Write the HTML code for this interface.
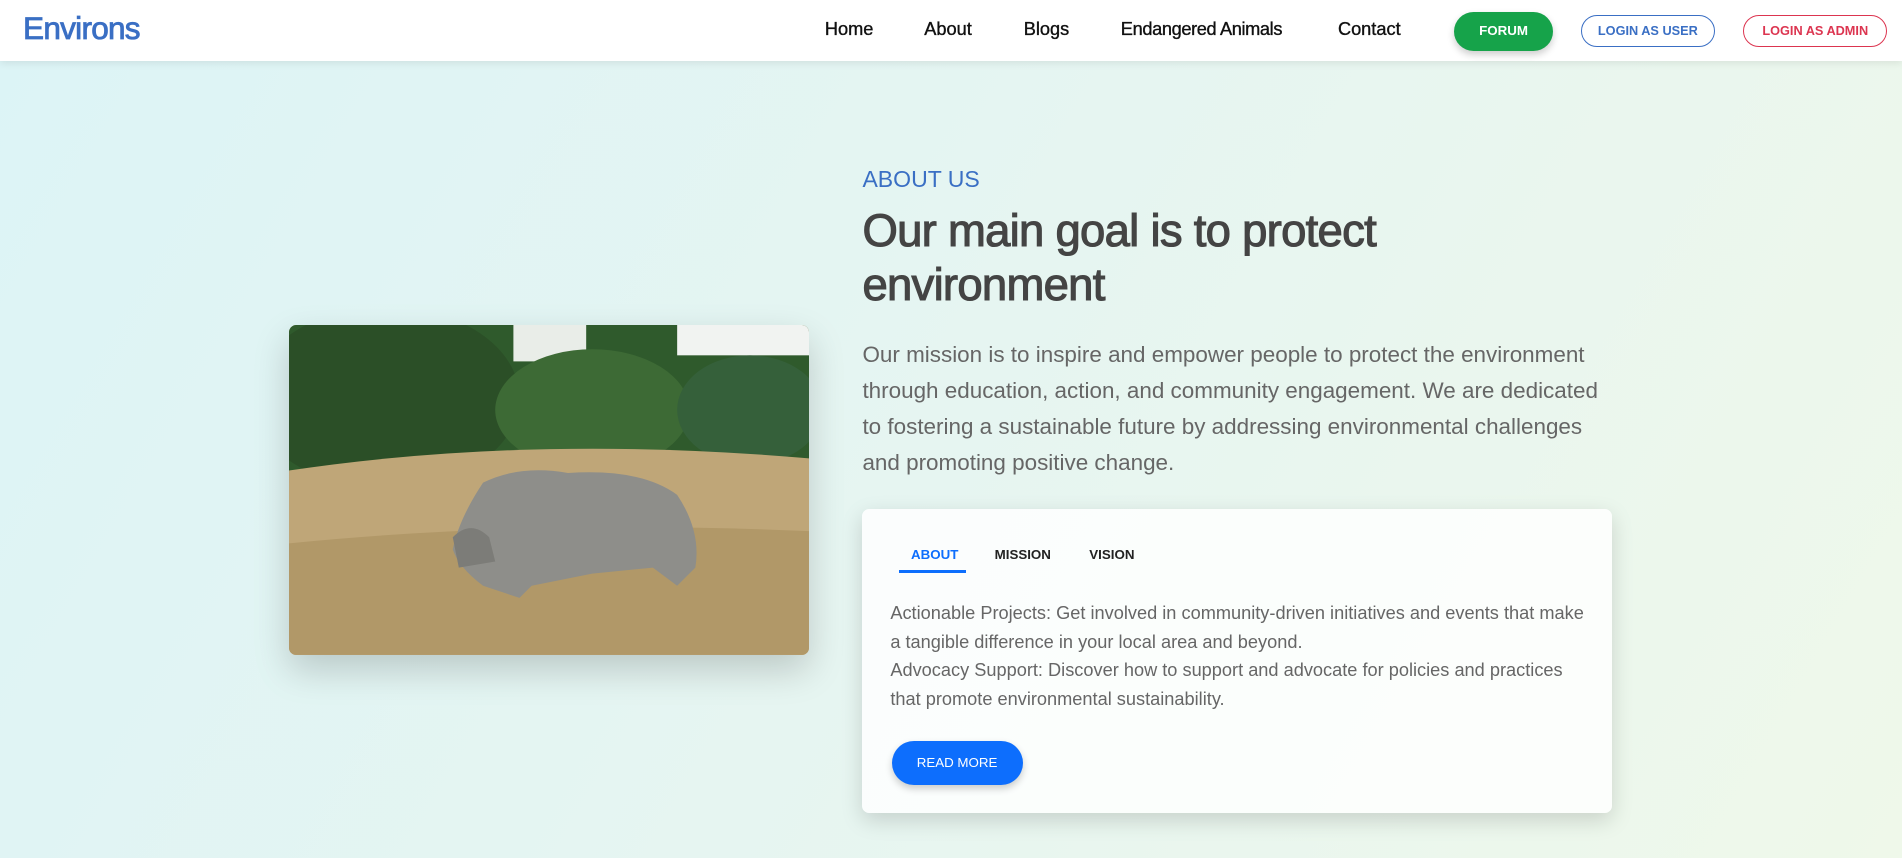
<!DOCTYPE html>
<html><head><meta charset="utf-8"><style>
html,body{margin:0;padding:0;overflow:hidden}
body{width:1568px;height:707px;zoom:1.2130;font-family:"Liberation Sans",Roboto,sans-serif;background:linear-gradient(120deg,#dcf4f6 0%,#e6f5f1 50%,#eff8ea 100%);position:relative}
.nav{position:absolute;left:0;top:0;width:1568px;height:50px;background:#fff;box-shadow:0 2px 6px rgba(0,0,0,.08)}
.logo{position:absolute;left:19px;top:8px;font-size:26px;color:#3a6fc4;letter-spacing:-0.6px;-webkit-text-stroke:0.7px #3a6fc4}
.nl{position:absolute;top:16px;font-size:15px;color:#111;-webkit-text-stroke:0.3px #111}
.btn{position:absolute;border-radius:20px;font-size:11px;font-weight:bold;text-align:center;box-sizing:border-box}
.abs{position:absolute}
.img{left:238px;top:268px;width:429px;height:272px;border-radius:6px;overflow:hidden;box-shadow:0 12px 30px rgba(0,0,0,.18)}
.card{left:711px;top:420px;width:618px;height:250px;background:rgba(255,255,255,.82);border-radius:6px;box-shadow:0 6px 18px rgba(0,0,0,.15)}
.tab{position:absolute;top:31px;font-size:11px;font-weight:bold;color:#222}
</style></head><body>
<div class="nav">
<div class="logo">Environs</div>
<div class="nl" style="left:680px">Home</div>
<div class="nl" style="left:762px">About</div>
<div class="nl" style="left:844px">Blogs</div>
<div class="nl" style="left:924px;letter-spacing:-0.3px">Endangered Animals</div>
<div class="nl" style="left:1103px">Contact</div>
<div class="btn" style="left:1199px;top:10px;width:81px;height:32px;line-height:32px;background:#16a34a;color:#fff;box-shadow:0 3px 6px rgba(0,0,0,.2)">FORUM</div>
<div class="btn" style="left:1303px;top:12px;width:111px;height:27px;line-height:24px;border:1.5px solid #3a6fc4;color:#3a6fc4;font-size:10.5px">LOGIN AS USER</div>
<div class="btn" style="left:1437px;top:12px;width:119px;height:27px;line-height:24px;border:1.5px solid #dc3550;color:#dc3550;font-size:10.5px">LOGIN AS ADMIN</div>
</div>

<div class="abs img">
<svg width="429" height="272" viewBox="0 0 429 272">
<rect width="429" height="272" fill="#c8b38a"/>
<rect width="429" height="130" fill="#2f5a2c"/>
<rect x="185" y="0" width="60" height="30" fill="#e9ede8"/>
<rect x="320" y="0" width="109" height="25" fill="#f1f3f1"/>
<ellipse cx="80" cy="60" rx="110" ry="75" fill="#2b4f27"/>
<ellipse cx="250" cy="70" rx="80" ry="50" fill="#3d6a35"/>
<ellipse cx="380" cy="70" rx="60" ry="45" fill="#35603a"/>
<path d="M0 120 Q200 90 429 110 L429 272 L0 272Z" fill="#bfa678"/>
<path d="M0 180 Q200 160 429 170 L429 272 L0 272Z" fill="#b19868"/>
<path d="M160 130 Q190 115 230 122 Q290 118 320 140 Q340 170 335 200 L320 215 L300 200 L250 205 L200 215 L190 225 L160 215 Q140 200 135 185 Q140 160 160 130Z" fill="#8e8e8a"/>
<path d="M135 175 Q150 160 165 175 L170 195 L140 200Z" fill="#7c7c78"/>
</svg>
</div>

<div class="abs" style="left:711px;top:137px;font-size:19px;color:#3a6fc4">ABOUT US</div>
<div class="abs" style="left:711px;top:168px;font-size:37.5px;line-height:45px;color:#444;letter-spacing:-0.6px;-webkit-text-stroke:0.9px #444">Our main goal is to protect<br>environment</div>
<div class="abs" style="left:711px;top:278px;width:620px;font-size:18.5px;line-height:29.7px;color:#666">Our mission is to inspire and empower people to protect the environment through education, action, and community engagement. We are dedicated to fostering a sustainable future by addressing environmental challenges and promoting positive change.</div>

<div class="abs card">
<div class="tab" style="left:40px;color:#0d6efd">ABOUT</div>
<div class="abs" style="left:30px;top:50px;width:55px;height:2px;background:#0d6efd"></div>
<div class="tab" style="left:109px">MISSION</div>
<div class="tab" style="left:187px">VISION</div>
<div class="abs" style="left:23px;top:74px;width:580px;font-size:15px;line-height:23.5px;color:#666">Actionable Projects: Get involved in community-driven initiatives and events that make a tangible difference in your local area and beyond.<br>Advocacy Support: Discover how to support and advocate for policies and practices that promote environmental sustainability.</div>
<div class="btn" style="left:24px;top:191px;width:108px;height:36px;line-height:36px;background:#0d6efd;color:#fff;font-weight:500;box-shadow:0 3px 6px rgba(0,0,0,.2)">READ MORE</div>
</div>
</body></html>
